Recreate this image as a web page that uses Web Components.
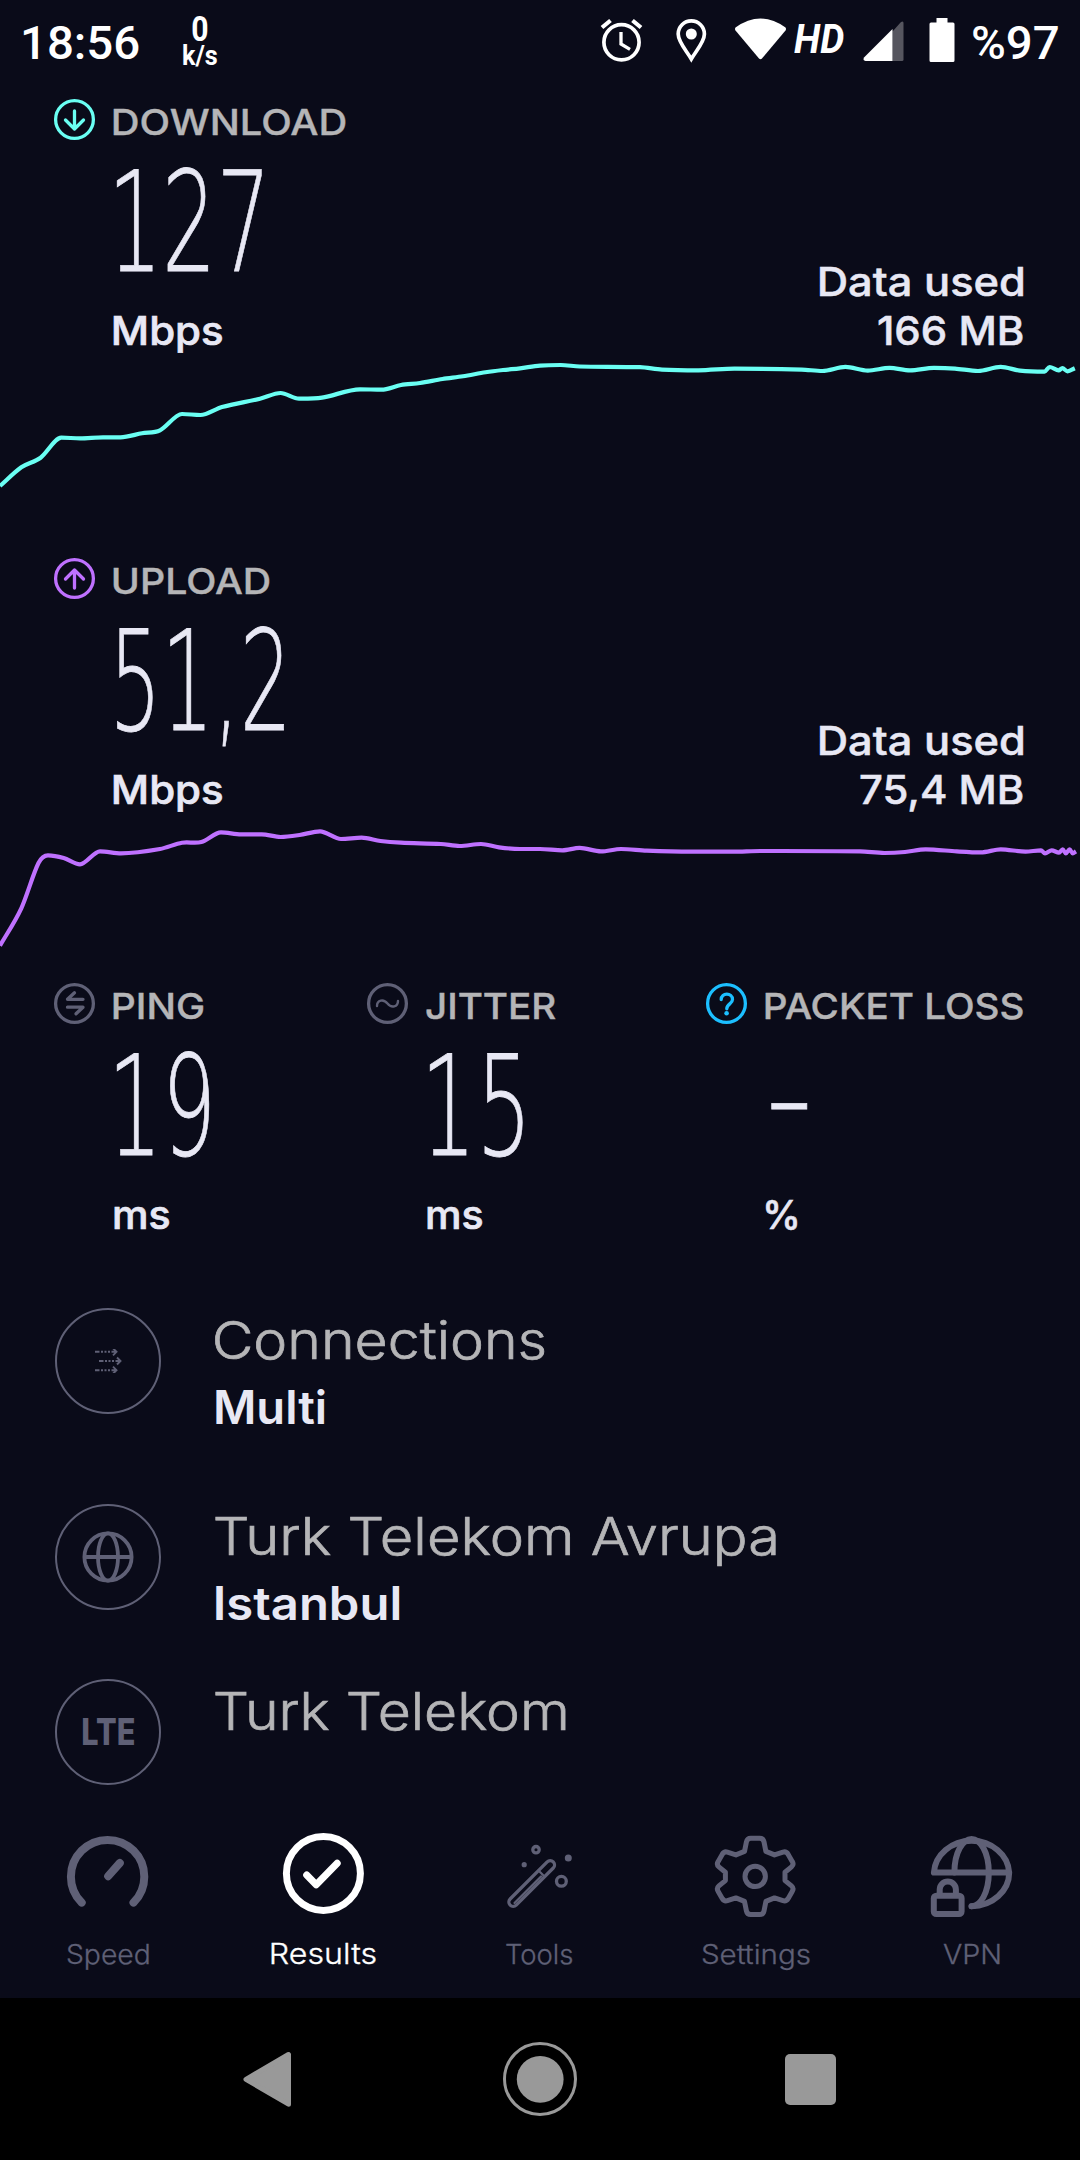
<!DOCTYPE html>
<html lang="en">
<head>
  <meta charset="UTF-8">
  <meta name="viewport" content="width=device-width, initial-scale=1.0">
  <title>Speed test result</title>
  <style>
    body {
      margin: 0;
      background: #0a0b19;
      color: #e8e8f4;
      font-family: Inter, "Liberation Sans", sans-serif;
      font-optical-sizing: none;
    }
  </style>
</head>
<body>
  <result-app></result-app>

  <script>
    const measure = document.createElement('canvas').getContext('2d');

    // One line of text whose ink is fitted to the width in the "w" attribute
    class FitText extends HTMLElement {
      constructor() {
        super();
        this.attachShadow({ mode: 'open' });
      }

      connectedCallback() {
        const width = Number(this.getAttribute('w'));
        this.shadowRoot.innerHTML = `
          <style>
            :host { display: block; flex: none; width: ${width}px; white-space: nowrap; }
            span { display: inline-block; transform-origin: 0 50%; }
          </style>
          <span><slot></slot></span>
        `;
        const cs = getComputedStyle(this);
        measure.font = `${cs.fontStyle} ${cs.fontWeight} ${cs.fontSize} ${cs.fontFamily}`;
        const m = measure.measureText(this.textContent);
        const scale = width / (m.actualBoundingBoxLeft + m.actualBoundingBoxRight);
        this.shadowRoot.querySelector('span').style.transform =
          `translateX(${m.actualBoundingBoxLeft * scale}px) scaleX(${scale})`;
      }
    }
    customElements.define('fit-text', FitText);

    // Round 41px badge used beside the metric labels
    const BADGES = {
      down: '<path d="M20.5 11v18M11.5 20l9 9 9-9"/>',
      up: '<path d="M20.5 29V11M11.5 20l9-9 9 9"/>',
      ping: '<path d="M29 15.3H13.5l7-6.5M13.5 23.2H29l-7 6.6"/>',
      jitter: '<path stroke-width="2.4" d="M10 22c0-6 6.500-7.500 10.500-2.500s10.500 3.500 10.500-2.500"/>',
      help: '<path d="M15.200 15.500c0-7.300 11.300-7 11.300 0 0 4.500-5.700 4.300-5.700 9.300"/><circle cx="20.600" cy="29.300" r="2.300" fill="currentColor" stroke="none"/>'
    };

    class MetricBlock extends HTMLElement {
      constructor() {
        super();
        this.attachShadow({ mode: 'open' });
      }

      connectedCallback() {
        const get = (name) => this.getAttribute(name);
        const drop = Number(get('drop') || 19);
        this.shadowRoot.innerHTML = `
          <style>
            :host { display: block; height: 255px; }
            header { display: flex; height: 44px; line-height: 44px; font-size: 36px; font-weight: 500; color: #b5b5b7; -webkit-text-stroke: 0.400px currentColor; }
            svg { flex: none; width: 59.200px; height: 44px; overflow: visible; color: ${get('tint')}; }
            .value {
              margin: ${drop}px 0 ${42 - drop}px ${get('inset') || 63}px;
              height: 120px; line-height: 120px; font-size: 138.500px; font-weight: 200;
              font-family: "DejaVu Sans Light", "DejaVu Sans", sans-serif;
              -webkit-text-stroke: 0.800px currentColor;
            }
            .unit { margin-left: 59.500px; line-height: 49px; font-size: 40px; font-weight: 500; -webkit-text-stroke: 0.700px currentColor; }
          </style>
          <header>
            <svg viewBox="0 0 59.200 44" fill="none" stroke="currentColor" stroke-width="3.300" stroke-linecap="round" stroke-linejoin="round">
              <circle cx="20.500" cy="19.500" r="18.900"/>${BADGES[get('icon')]}
            </svg>
            <fit-text w="${get('label-w')}">${get('label')}</fit-text>
          </header>
          <fit-text class="value" w="${get('value-w')}">${get('value')}</fit-text>
          <fit-text class="unit" w="${get('unit-w')}">${get('unit')}</fit-text>
        `;
      }
    }
    customElements.define('metric-block', MetricBlock);

    class DataUsed extends HTMLElement {
      constructor() {
        super();
        this.attachShadow({ mode: 'open' });
        this.shadowRoot.innerHTML = `
          <style>
            :host {
              display: flex; flex-direction: column; justify-content: flex-end; align-items: flex-end;
              line-height: 49px; font-size: 40px; font-weight: 500; -webkit-text-stroke: 0.500px currentColor;
            }
          </style>
          <fit-text w="203">Data used</fit-text>
          <slot></slot>
        `;
      }
    }
    customElements.define('data-used', DataUsed);

    // Smooth throughput line through "x,y x,y ..." samples
    class SpeedChart extends HTMLElement {
      constructor() {
        super();
        this.attachShadow({ mode: 'open' });
      }

      connectedCallback() {
        const height = this.getAttribute('height');
        const p = this.getAttribute('points').trim().split(/\s+/).map((s) => s.split(',').map(Number));
        let d = `M${p[0]}`;
        for (let i = 0; i < p.length - 1; i++) {
          const a = p[i - 1] || p[i], b = p[i], c = p[i + 1], e = p[i + 2] || c;
          const dx = (c[0] - b[0]) / 3.2;
          const slope = (m, n) => (n[1] - m[1]) / ((n[0] - m[0]) || 1);
          // turning points stay flat so the line never overshoots
          const s1 = (b[1] - a[1]) * (c[1] - b[1]) <= 0 && i ? 0 : slope(a, c);
          const s2 = (c[1] - b[1]) * (e[1] - c[1]) <= 0 && e !== c ? 0 : slope(b, e);
          d += `C${b[0] + dx},${b[1] + s1 * dx} ${c[0] - dx},${c[1] - s2 * dx} ${c}`;
        }
        this.shadowRoot.innerHTML = `
          <style>
            :host { display: block; height: ${height}px; }
            svg { display: block; width: 1080px; height: ${height}px; overflow: visible; }
          </style>
          <svg viewBox="0 ${this.getAttribute('top')} 1080 ${height}" fill="none" stroke="${this.getAttribute('tint')}" stroke-width="4.200" stroke-linejoin="round">
            <path d="${d}"/>
          </svg>
        `;
      }
    }
    customElements.define('speed-chart', SpeedChart);

    class StatusBar extends HTMLElement {
      constructor() {
        super();
        this.attachShadow({ mode: 'open' });
        this.shadowRoot.innerHTML = `
          <style>
            :host {
              display: flex; height: 84px; padding: 0 22px 0 23px; box-sizing: border-box;
              color: #fff; font-family: Roboto, sans-serif; font-weight: 500; font-size: 47px; line-height: 86px;
            }
            .rate { width: 35px; margin: 16px auto 0 44px; font-weight: 700; }
            .rate fit-text { margin: auto; font-size: 35px; line-height: 27px; }
            .rate .unit { font-size: 27px; line-height: 26px; }
            svg { flex: none; width: 194px; height: 84px; }
            .hd { font-size: 40px; line-height: 79px; font-weight: 700; font-style: italic; }
            .power { width: 129px; }
          </style>
          <fit-text w="115.500">18:56</fit-text>
          <div class="rate">
            <fit-text w="15.500">0</fit-text>
            <fit-text class="unit" w="34">k/s</fit-text>
          </div>
          <svg viewBox="601 0 194 84" fill="none" stroke="#fff" stroke-width="3.700">
            <circle cx="622.500" cy="42.300" r="17.600"/>
            <path d="M622 32v12l9 5.300" stroke-width="3.300"/>
            <path d="M603 27.500l8.500-7M633.500 20.500l8.500 7" stroke-width="4.200"/>
            <path d="M692.300 59c-5-8.500-13.100-17-13.100-25a13.100 13.100 0 0 1 26.200 0c0 8-8.100 16.500-13.100 25z"/>
            <circle cx="692.300" cy="34" r="5.500" fill="#fff" stroke="none"/>
            <path d="M736.500 27.500q25-18 50 0 1 1.500 0 3L763 58.500q-1.500 1.500-3 0L736.500 30.500q-1-1.500 0-3z" fill="#fff" stroke="none"/>
          </svg>
          <fit-text class="hd" w="50">HD</fit-text>
          <svg class="power" viewBox="844.500 0 129 84">
            <path d="M893 31.500L901.500 22Q904 20.500 904 23V59.500Q904 61 902.500 61H893z" fill="#56565f"/>
            <path d="M893 29V61H866Q863 60.500 864.500 57.500z" fill="#fff"/>
            <path d="M937 18h11v4.500h5.500q1.500 0 1.500 1.500v36.500q0 1.500-1.500 1.500h-22q-1.500 0-1.500-1.500V24q0-1.500 1.500-1.500h5.500z" fill="#fff"/>
          </svg>
          <fit-text w="85">%97</fit-text>
        `;
      }
    }
    customElements.define('status-bar', StatusBar);

    // Circle icon with a title and an optional bold second line
    class DetailRow extends HTMLElement {
      constructor() {
        super();
        this.attachShadow({ mode: 'open' });
        this.shadowRoot.innerHTML = `
          <style>
            :host { display: flex; gap: 54px; padding-left: 55px; }
            .ring {
              display: grid; place-items: center; flex: none; box-sizing: border-box;
              width: 106px; height: 106px; border: 2px solid #5f6076; border-radius: 50%; color: #5f6076;
            }
            ::slotted([slot=title]) { font-size: 52px; font-weight: 300; line-height: 65px; color: #b5b5b7; -webkit-text-stroke: 0.700px currentColor; }
            ::slotted([slot=name]) { margin-left: 1px; font-size: 46px; font-weight: 600; line-height: 69px; }
          </style>
          <div class="ring"><slot name="icon"></slot></div>
          <div><slot name="title"></slot><slot name="name"></slot></div>
        `;
      }
    }
    customElements.define('detail-row', DetailRow);

    const TABS = {
      speed: '<g stroke-width="8"><path d="M15.700 68.600a36.700 36.700 0 1 1 51.800 0M42.200 42.200L53.800 29"/></g>',
      results: '<g stroke-width="7"><circle cx="41.400" cy="39.400" r="37"/><path d="M24.700 41l9.500 9.800L55.200 29.300"/></g>',
      tools: `<g stroke-width="3.300"><rect x="-4.300" y="-30.500" width="8.600" height="61" rx="4.300" transform="translate(33.700 49.500) rotate(45)"/>
        <path d="M40.500 36.500l6 6M43 42.500L16.500 69" stroke-width="2.200"/>
        <circle cx="38" cy="15.700" r="3.200"/><circle cx="63.400" cy="47.300" r="4.900"/></g>
        <g fill="currentColor" stroke="none"><circle cx="26.200" cy="30.700" r="2.600"/><circle cx="70.300" cy="24" r="3.500"/></g>`,
      settings: `<g stroke-width="5" transform="translate(41.200 42.400)"><circle r="10.200"/>
        <path d="M-10.700-25l1.900-9.500Q-8-38.200-4.500-38.200h9Q8-38.200 8.800-34.500L10.700-25l8.600 3.500 8.500-2.800Q31-25.300 33-22l4 7Q39-11.800 36.300-9.500l-6.500 5.300v8.400l6.500 5.300Q39 11.800 37 15l-4 7Q31 25.300 27.800 24.300l-8.500-2.800-8.600 3.500-1.900 9.500Q8 38.200 4.500 38.200h-9Q-8 38.200-8.800 34.500L-10.700 25l-8.600-3.500-8.500 2.800Q-31 25.300-33 22l-4-7Q-39 11.800-36.300 9.500l6.500-5.300v-8.400l-6.500-5.300Q-39-11.800-37-15l4-7Q-31-25.300-27.800-24.300l8.500 2.800z"/></g>`,
      vpn: `<g stroke-width="6"><path d="M3.900 38.600A37.700 33.600 0 0 1 79.200 38.600 37.700 33.600 0 0 1 41.500 72.200M3.900 38.600H79.200"/>
        <path d="M24.400 38.600C24.400 18 33 5 41.600 5s17.200 13 17.200 33.600-8.600 33.600-17.200 33.600"/>
        <rect x="3.800" y="61.700" width="27.800" height="18.300" rx="2.500"/><path d="M9.700 61v-5.500a8.100 8.100 0 0 1 16.200 0V61"/></g>`
    };

    class TabItem extends HTMLElement {
      constructor() {
        super();
        this.attachShadow({ mode: 'open' });
      }

      connectedCallback() {
        this.shadowRoot.innerHTML = `
          <style>
            :host {
              display: flex; flex-direction: column; align-items: center; flex: 1; padding-top: 36px;
              color: #5f6076; font-size: 27px; font-weight: 300; line-height: 73px;
              -webkit-text-stroke: 0.300px currentColor;
            }
            :host([active]) { color: #fff; font-size: 29px; line-height: 71px; }
            svg { width: 84px; height: 84px; overflow: visible; }
            ::slotted(fit-text) { margin-right: 1px; }
          </style>
          <svg viewBox="0 0 84 84" fill="none" stroke="currentColor" stroke-linecap="round" stroke-linejoin="round">${TABS[this.getAttribute('icon')]}</svg>
          <slot></slot>
        `;
      }
    }
    customElements.define('tab-item', TabItem);

    class SystemNav extends HTMLElement {
      constructor() {
        super();
        this.attachShadow({ mode: 'open' });
        this.shadowRoot.innerHTML = `
          <style>
            :host { display: flex; justify-content: center; height: 162px; background: #000; }
            svg { width: 270px; height: 162px; }
          </style>
          <svg viewBox="135 0 270 162"><path d="M246 81.300L288.500 56.500V106.200z" fill="#999" stroke="#999" stroke-width="5" stroke-linejoin="round"/></svg>
          <svg viewBox="405 0 270 162"><circle cx="540" cy="81" r="35.500" fill="none" stroke="#999" stroke-width="3"/><circle cx="540.200" cy="81.300" r="23.400" fill="#999"/></svg>
          <svg viewBox="675 0 270 162"><rect x="785" y="56" width="51" height="51" rx="5" fill="#999"/></svg>
        `;
      }
    }
    customElements.define('system-nav', SystemNav);

    class ResultApp extends HTMLElement {
      constructor() {
        super();
        this.attachShadow({ mode: 'open' });
        this.shadowRoot.innerHTML = `
          <style>
            :host { display: flex; flex-direction: column; width: 1080px; height: 2160px; overflow: hidden; }
            .test { display: flex; justify-content: space-between; padding: 0 57px 0 54px; }
            .download { padding-top: 16px; }
            .latency { display: grid; grid-template-columns: 313px 339px 1fr; padding-left: 54px; height: 324px; }
            .details { display: grid; grid-template-rows: 196px 175px 119px; }
            .lte { font-size: 37px; font-weight: 800; line-height: 40px; }
            .tabs { display: flex; height: 200px; }
          </style>
          <status-bar></status-bar>
          <section class="test download">
            <metric-block icon="down" tint="#6afff3" label="DOWNLOAD" label-w="232" value="127" value-w="144.500" unit="Mbps" unit-w="108"></metric-block>
            <data-used><fit-text w="145">166 MB</fit-text></data-used>
          </section>
          <speed-chart tint="#6afff3" top="355" height="204" points="0,486 21.3,467.3 40.6,457.7 61.3,437.7 80,438.3 103,437.3 120.5,437.3 142,433.3 160,430.3 182,414 200.4,415 222,407 260,398.7 280.6,393 299,398.7 322,397.7 360,389.3 381.5,389.7 401,385 420,383 442.5,379 463,376.3 485.5,372.3 503,370 520,368.3 540,365.6 560.7,365 579.6,366.5 640,367.2 662,369.6 698.4,370.3 734.5,368.6 801.7,369.6 822.4,371 845.4,366.9 867.8,370.6 889.5,367.9 910,370.3 934,367.9 955,368.6 978,371 1000.7,366.9 1020,370.6 1044.5,371.7 1049.6,367 1058.6,370.3 1062.4,368.2 1067.5,371.3 1074.8,368.2"></speed-chart>
          <section class="test">
            <metric-block icon="up" tint="#bf71ff" label="UPLOAD" label-w="156" value="51,2" value-w="167" unit="Mbps" unit-w="108"></metric-block>
            <data-used><fit-text w="163">75,4 MB</fit-text></data-used>
          </section>
          <speed-chart tint="#bf71ff" top="814" height="170" points="0,945.7 21.3,908.3 38.5,863 48,855.3 63.7,858 80,864.3 100,851.3 121,853.3 160,849 182,842.7 201.4,842 221,832.3 241,834.3 261.7,834.3 280.6,837 299.6,835 320,831.3 341,839 361.6,837.7 380.5,841 401,842.7 440.8,844 459.7,846 481,844 499,847.3 520,849 540,849 562.4,850.3 579.6,847.9 601,851.4 621,849 646.7,850.7 691.5,851.7 732.8,851.7 760.4,851 860,851.4 884.4,853 905,852 925.7,849.3 956.7,851.4 980.8,852.4 1000.7,849.3 1025.5,851.7 1041,850.3 1045,853.4 1051.7,850.3 1059,852.7 1062.7,849.3 1065.8,853.4 1069.6,849.3 1072.7,853.4 1076,851.4"></speed-chart>
          <section class="latency">
            <metric-block icon="ping" tint="#5f6076" label="PING" label-w="90" value="19" value-w="92.500" unit="ms" unit-w="55"></metric-block>
            <metric-block icon="jitter" tint="#5f6076" label="JITTER" label-w="130" value="15" value-w="92.500" unit="ms" unit-w="55"></metric-block>
            <metric-block icon="help" tint="#1cbfff" label="PACKET LOSS" label-w="258" value="-" value-w="36.500" inset="65" drop="8" unit="%" unit-w="31"></metric-block>
          </section>
          <section class="details">
            <detail-row>
              <svg slot="icon" width="28" height="24" viewBox="94 1349.500 28 24" fill="none" stroke="currentColor" stroke-width="1.900">
                <path d="M95 1352.300h4.500m1.500 0h2m1.500 0h2m1.500 0h2m1.500 0h5.500m-4-3.500l3.500 3.500-3.500 3.500M99 1361.500h4.500m1.500 0h2m1.500 0h2m1.500 0h2m1.500 0h5.500m-4-3.500l3.500 3.500-3.500 3.500M95 1370.700h4.500m1.500 0h2m1.500 0h2m1.500 0h2m1.500 0h5.500m-4-3.500l3.500 3.500-3.500 3.500"/>
              </svg>
              <fit-text slot="title" w="329">Connections</fit-text>
              <fit-text slot="name" w="109">Multi</fit-text>
            </detail-row>
            <detail-row>
              <svg slot="icon" width="52" height="52" viewBox="0 0 52 52" fill="none" stroke="currentColor" stroke-width="3.800">
                <circle cx="26" cy="26" r="23.600"/><ellipse cx="26" cy="26" rx="10" ry="23.600"/><path d="M2.400 26h47.200"/>
              </svg>
              <fit-text slot="title" w="561">Turk Telekom Avrupa</fit-text>
              <fit-text slot="name" w="183">Istanbul</fit-text>
            </detail-row>
            <detail-row>
              <fit-text slot="icon" class="lte" w="51">LTE</fit-text>
              <fit-text slot="title" w="351">Turk Telekom</fit-text>
            </detail-row>
          </section>
          <nav class="tabs">
            <tab-item icon="speed"><fit-text w="81.500">Speed</fit-text></tab-item>
            <tab-item icon="results" active><fit-text w="105">Results</fit-text></tab-item>
            <tab-item icon="tools"><fit-text w="66.500">Tools</fit-text></tab-item>
            <tab-item icon="settings"><fit-text w="108">Settings</fit-text></tab-item>
            <tab-item icon="vpn"><fit-text w="56.500">VPN</fit-text></tab-item>
          </nav>
          <system-nav></system-nav>
        `;
      }
    }
    customElements.define('result-app', ResultApp);
  </script>
</body>
</html>
